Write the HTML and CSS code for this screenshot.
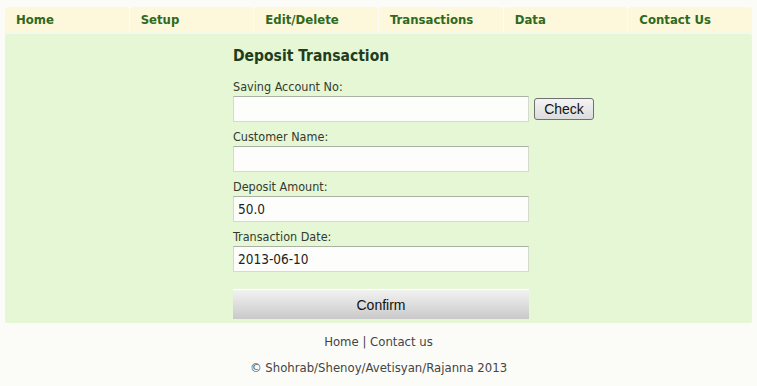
FILE: index.html
```html
<!DOCTYPE html>
<html lang="en">

<head>
    <title>Deposit Transaction</title>
    <link rel="stylesheet" href="styles.css">
</head>

<body>
    <ul class="menu">
        <li><a href="#">Home</a></li>
        <li><a href="#">Setup</a></li>
        <li><a href="#">Edit/Delete</a></li>
        <li><a href="#">Transactions</a></li>
        <li><a href="#">Data</a></li>
        <li><a href="#">Contact Us</a></li>
    </ul>

    <div class="content">
        <form class="deposit-form">
            <h3>Deposit Transaction</h3>

            <label for="accountNo">Saving Account No:</label>
            <div class="field-row">
                <input type="text" id="accountNo">
                <button type="button" class="check-button">Check</button>
            </div>

            <label for="customerName">Customer Name:</label>
            <div class="field-row">
                <input type="text" id="customerName">
            </div>

            <label for="amount">Deposit Amount:</label>
            <div class="field-row">
                <input type="text" id="amount" value="50.0">
            </div>

            <label for="txDate">Transaction Date:</label>
            <div class="field-row">
                <input type="text" id="txDate" value="2013-06-10">
            </div>

            <button type="button" class="confirm-button">Confirm</button>
        </form>
    </div>

    <div class="footer">
        <p><a href="#">Home</a> | <a href="#">Contact us</a></p>
        <p>&copy; Shohrab/Shenoy/Avetisyan/Rajanna 2013</p>
    </div>
</body>

</html>
```

FILE: styles.css
```css
body {
    margin: 0;
    padding: 5px 5px 0;
    font-family: "DejaVu Sans Condensed", "DejaVu Sans", sans-serif;
    font-size: 12.5px;
    color: #333333;
    background-color: #fbfcf8;
}

.menu {
    list-style: none;
    margin: 0;
    padding: 2px 0 0;
    display: flex;
    gap: 1px;
    height: 24px;
    border-bottom: 3px solid #f6f8ee;
}

.menu li {
    flex: 1;
    background-color: #fdf7dc;
    border-radius: 3px 3px 0 0;
    display: flex;
    align-items: center;
}

.menu a {
    padding-left: 11px;
    color: #2f6a1c;
    font-weight: bold;
    font-size: 13px;
    text-decoration: none;
}

.content {
    background-color: #e5f7d5;
    height: 289px;
    border-radius: 2px;
}

.deposit-form {
    margin-left: 228px;
    padding-top: 13px;
    width: 370px;
}

h3 {
    margin: 0 0 13px;
    font-size: 15.5px;
    font-weight: bold;
    color: #1f3d1c;
}

label {
    display: block;
    height: 18px;
    line-height: 18px;
    color: #343a30;
}

.field-row {
    display: flex;
    align-items: center;
    gap: 5px;
    margin-bottom: 6px;
}

input {
    width: 296px;
    height: 26px;
    box-sizing: border-box;
    padding: 0 4px;
    border: 1px solid #d4dacd;
    border-top-color: #aab2a3;
    background-color: #fdfefb;
    font-family: "DejaVu Sans Condensed", "DejaVu Sans", sans-serif;
    font-size: 13.5px;
    color: #222222;
    outline: none;
}

.check-button {
    width: 60px;
    height: 22px;
    padding: 0;
    border: 1px solid #707070;
    border-radius: 3px;
    background: linear-gradient(#f4f4f4, #dcdcdc);
    font-family: "Liberation Sans", Arial, sans-serif;
    font-size: 14px;
    color: #111111;
}

.confirm-button {
    display: block;
    margin-top: 17px;
    width: 296px;
    height: 30px;
    padding: 0;
    border: none;
    border-top: 1px solid #ffffff;
    background: linear-gradient(#f2f2f2, #e2e2e2 40%, #c9c9c9);
    font-family: "Liberation Sans", Arial, sans-serif;
    font-size: 14px;
    color: #111111;
}

.footer {
    text-align: center;
    color: #444444;
    font-size: 13px;
}

.footer p {
    margin: 0;
    padding-top: 11px;
    line-height: 15px;
}

.footer p + p {
    padding-top: 11px;
}

.footer a {
    color: #444444;
    text-decoration: none;
}
```
